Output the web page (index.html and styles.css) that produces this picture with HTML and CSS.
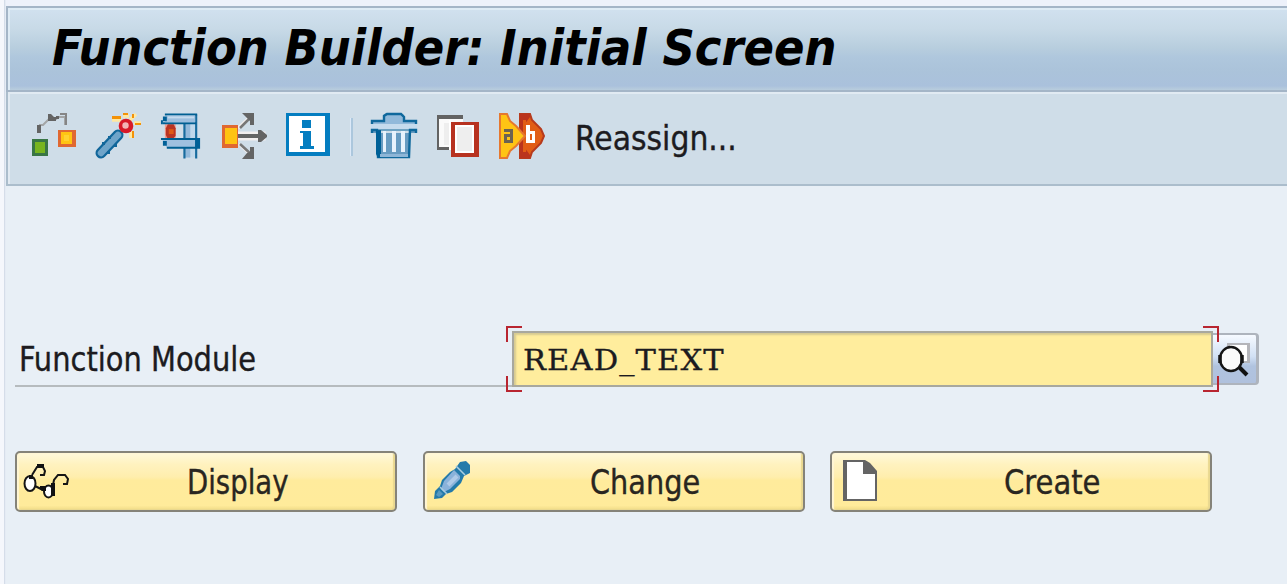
FILE: index.html
```html
<!DOCTYPE html>
<html lang="en">
<head>
<meta charset="utf-8">
<title>Function Builder: Initial Screen</title>
<link rel="stylesheet" href="styles.css">
</head>
<body>
<main class="window">
  <header class="titlebar"><h1 class="title">Function Builder: Initial Screen</h1></header>
  <nav class="toolbar">
    <svg class="icon" viewBox="0 0 46 46">
      <path d="M9 20v-8h3l6-6h7l3-2h6v8" fill="none" stroke="#a3a5a6" stroke-width="2"/>
      <path d="M6 12h4v8H6zM17 1h3l3 3h2v4h-8zM25 3h3v3h-3z" fill="#646464"/><path d="M29 1h6v11" fill="none" stroke="#858585" stroke-width="2"/>
      <path d="M1 26h16v17H1z" fill="#397645"/><path d="M4 29h10v11H4z" fill="#78b51e"/>
      <path d="M27 17h18v17H27z" fill="#e06831"/><path d="M30 19h11v12H30z" fill="#ffc412"/><path d="M33 22h5v6h-5z" fill="#ffd230"/>
    </svg>
    <svg class="icon" viewBox="0 0 46 46">
      <path d="M6 40 23 22" stroke="#11669a" stroke-width="11" stroke-linecap="round"/>
      <path d="M6 40 23 22" stroke="#6fa4c9" stroke-width="6.500" stroke-linecap="round"/>
      <path d="M7 29h3v3H7zM13 23h3v3h-3zM19 31h3v3h-3zM12 38h3v3h-3z" fill="#11669a"/>
      <path d="m35 7 6-6M39 10h7M28 3h6M17 7h9M36 18v7" stroke="#ffe8a0" stroke-width="3.500"/>
      <path d="M17 3h9v3h-9zM28 0h5v2h-5zM37 1h2v4h-2zM40 10h6v2h-6zM37 18h2v7h-2z" fill="#f39208"/>
      <circle cx="31" cy="13" r="7.3" fill="#d71928"/><circle cx="30.500" cy="12.500" r="3.200" fill="#f3b4b5"/>
    </svg>
    <svg class="icon clamp" viewBox="0 0 46 46">
      <path d="M26 9h12v36H26z" fill="#c0d8eb"/><path d="M26 10h6v35h-6z" fill="#93b9da"/><path d="M26 10v36M38 1v45" stroke="#176b9e" stroke-width="2.200"/>
      <path d="M6 11h11v16H6z" fill="#f29a8d"/><path d="m9 11h6l2 4v8l-3 3H9l-2-4v-7z" fill="#b93524"/><path d="M10 16h5v5h-5z" fill="#df5a16"/>
      <path d="M6 1h33M4 10h34" stroke="#005f92" stroke-width="2"/><path d="M8 2h29v7H6z" fill="#9cbede"/><path d="M4 3h4v5H4zM2 7h2v4H2z" fill="#006097"/><path d="M9 3h27v2H9z" fill="#c5daed"/>
      <path d="M3 26h36v9H8z" fill="#9fc0df"/><path d="M2 26h36v9H8" fill="none" stroke="#005f92" stroke-width="2"/><path d="M4 28h4v5H4zM37 25h5v11h-5z" fill="#006097"/>
    </svg>
    <svg class="icon" viewBox="0 0 46 46">
      <path d="M16 20h26v6H16zM16 15 29 3M17 31l14 13" fill="none" stroke="#f2eeee" stroke-width="3"/>
      <path d="M18 15 29 4M18 31l12 11" stroke="#777" stroke-width="2.500"/>
      <path d="M20 0h12v12h-4V8l-4-4zM28 34h4v12H20l5-6 3-1zM15 21h21v-4h3l6 5v2l-6 5h-3v-4H15z" fill="#646464"/>
      <path d="M0 12h16v23H0z" fill="#e06831"/><path d="M3 15h12v16H3z" fill="#ffc412"/>
    </svg>
    <svg class="icon" viewBox="0 0 46 46">
      <path d="M0 0h44v43H0z" fill="#047dc0"/><path d="M3 3h36v36H3z" fill="#fff"/>
      <path d="M16 7h9v8h-9zM14 18h11v15h3v3H14v-3h3V20h-3z" fill="#047dc0"/>
    </svg>
    <span class="separator"></span>
    <svg class="icon" viewBox="0 0 46 46">
      <path d="M12 7V2l3-2h15l3 2v5h10l3 4H0l3-4z" fill="#91b9da"/>
      <path d="M1 11V8h12V3l3-2h14l3 3v4h12v3" fill="none" stroke="#0f689c" stroke-width="2.400"/>
      <path d="M0 11h46v5H0z" fill="#c5dbed"/>
      <path d="M1 20v-3h5l1 27h31l1-27h6v3" fill="#679bc1" stroke="#0f689c" stroke-width="2.400"/>
      <path d="M5 17h5v28H7l-2-4z" fill="#006097"/><path d="M9 41h28v3H9z" fill="#8eb6d7"/>
      <path d="M12 18h3v21h-3zM21 18h4v21h-4zM30 18h4v21h-4z" fill="#e8f2fc"/><path d="M6 17h33" stroke="#0f689c" stroke-width="1"/>
    </svg>
    <svg class="icon" viewBox="0 0 46 46">
      <path d="M3 3h25v32H3z" fill="#fafafa"/><path d="M2 2h26v4H4v28h10v3H2z" fill="#636363"/>
      <path d="M9 10h6v22H9z" fill="#eee"/><path d="M14 7h2v30h-2z" fill="#fff"/>
      <path d="M16 9h28v35H16z" fill="#b73220"/><path d="M20 12h19v28H20z" fill="#fff"/><path d="M22 14h15v24H22z" fill="#eee"/>
    </svg>
    <svg class="icon" viewBox="0 0 46 46">
      <path d="M21 1h10l2 6 9 9 3 7-3 7-9 9-2 6H21z" fill="#e15d15" stroke="#b63a1d" stroke-width="2"/>
      <path d="M21 1h10v3l-6 8 5 11-5 11 6 8v3H21z" fill="#ba341d"/>
      <path d="M24 7h3v32h-3z" fill="#e15d15"/>
      <path d="M1 1h7l3 7 6 5 9 10-9 10-6 5-3 7H1z" fill="#ffc414" stroke="#e57830" stroke-width="2"/>
      <path d="M5 16h9v14H5v-9h6v-2H5zm3 8v3h3v-3z" fill="#6c6352" fill-rule="evenodd"/>
      <path d="M27 12h4v6h5v12h-9zm4 9v6h2v-6z" fill="#fff" fill-rule="evenodd"/>
    </svg>
    <span class="label reassign">Reassign...</span>
  </nav>
  <section class="content">
    <div class="field-row">
      <div class="field-label"><span class="label module-label">Function Module</span></div>
      <div class="field"><div class="input"><span class="value">READ_TEXT</span></div>
        <i class="corner tl"></i><i class="corner tr"></i><i class="corner bl"></i><i class="corner br"></i>
      </div>
      <div class="search"><svg class="search-icon" viewBox="0 0 43 48">
        <path d="M14 8h23v20H14z" fill="#b4b5ba"/><path d="M17 10h17v16H17z" fill="#fff"/>
        <path d="m25 31 9 9" stroke="#111" stroke-width="4"/>
        <ellipse cx="18" cy="24" rx="11" ry="12" fill="#fafafa" stroke="#151515" stroke-width="2.400"/>
        <path d="M7 20v8M29 20v8" stroke="#151515" stroke-width="3.500"/>
      </svg></div>
    </div>
    <div class="actions">
      <button class="button"><svg class="button-icon" viewBox="0 0 48 46">
        <ellipse cx="13" cy="25.500" rx="5.500" ry="7.500" fill="#fff" stroke="#151515" stroke-width="2"/>
        <ellipse cx="31.500" cy="33.500" rx="4.500" ry="6" fill="#fff" stroke="#151515" stroke-width="2"/>
        <path d="m15 17 5-8h6l2 4-1 4h-4M36 27l1-5 4-5h7l3 4-1 5h-4M18 28l8 4" fill="none" stroke="#151515" stroke-width="2"/>
        <path d="M20 6h7v4h-7zM12 17h4v4h-4zM23 28h6v5h-4l-2-2zM34 25h4v13h-4z" fill="#111"/>
      </svg><span class="label display-label">Display</span></button>
      <button class="button"><svg class="button-icon" viewBox="0 0 48 46">
        <path d="m9 41 1-8 5-5 2-6 8-8 5-3 5-7 6-1 4 4v8l-6 3-3 7-9 9-6 2-4 4z" fill="#247aaa"/>
        <path d="m16 31 3-8 10-11 6 6v3L25 31l-6 3z" fill="#8ab2da"/><path d="m23 27 9-9" stroke="#afcae8" stroke-width="4"/>
        <path d="m31 8 9 9M15 29l7 7" stroke="#a9cde0" stroke-width="1.500"/><path d="m11 37 3-5 4 4-4 3z" fill="#5899c0"/>
      </svg><span class="label change-label">Change</span></button>
      <button class="button"><svg class="button-icon" viewBox="0 0 48 46">
        <path d="M11 2h22l5 3 7 8v30H11z" fill="#646464"/><path d="M15 4h16v12h12v25H15z" fill="#fff"/>
      </svg><span class="label create-label">Create</span></button>
    </div>
  </section>
</main>
</body>
</html>
```
FILE: styles.css
```css
* { box-sizing: border-box; }
body { margin: 0; height: 584px; overflow: hidden; background: #e8eff6; color: #1c1b20; font-family: "DejaVu Sans Condensed", "DejaVu Sans", sans-serif; }
.window { height: 584px; padding: 6px 0 0 6px; background: linear-gradient(90deg, #f5f7fc 0 4px, #d5dde9 4px 5px, #e5ebf4 5px 6px, transparent 6px), linear-gradient(#edf1fa 0 6px, #e8eff6 6px); }
.titlebar { height: 86px; padding-left: 44px; display: flex; align-items: center; border: solid #a4b5c7; border-width: 2px 0 2px 2px; box-shadow: inset 2px 2px #deebf5; background: linear-gradient(#d1e1ef 0%, #c8dae7 25%, #b8cede 48%, #afc7dd 60%, #abc3da 77%, #aac1dc 95%, #b9cddd 100%); }
.title { margin: -2px 0 0; color: #000; font: italic bold 50px/60px "DejaVu Sans", sans-serif; white-space: nowrap; transform-origin: 0 50%; transform: scaleX(.899); }
.toolbar { height: 94px; padding: 21px 0 0 23px; display: flex; align-items: flex-start; gap: 17.7px; background: #cfdde8; border: solid #abbdcc; border-width: 0 0 2px 2px; box-shadow: inset 2px 2px #e1eaf2; }
.icon { width: 46px; height: 46px; flex: none; overflow: visible; }
.clamp { padding-left: 1px; }
.separator { width: 3px; height: 38px; margin: 5px 0 0 1px; border-left: 1px solid #dce9f8; border-right: 2px solid #acc7dd; }
.label { display: inline-block; white-space: nowrap; font-size: 34px; line-height: 46px; transform-origin: 0 50%; -webkit-text-stroke: .35px; }
.reassign { margin: 2px 0 0 13px; transform: scaleX(.977); }
.content { padding: 145px 0 0 9px; }
.field-row { display: flex; height: 56px; }
.field-label { width: 497px; height: 56px; padding: 5px 0 0 4px; border-bottom: 2px solid #b6bbbe; }
.module-label { transform: scaleX(.945); }
.field { position: relative; width: 701px; height: 56px; }
.input { height: 56px; padding: 5px 0 0 9px; background: #ffed9d; border: 2px solid #a8a89e; box-shadow: inset 2px 2px 2px #d6ca92; }
.value { display: inline-block; font: 27.500px/45px "DejaVu Serif", serif; letter-spacing: 1px; white-space: nowrap; transform-origin: 0 50%; transform: scaleX(1.11); -webkit-text-stroke: .3px; }
.corner { position: absolute; width: 16px; height: 16px; border: 0 solid #b82530; }
.tl { left: -6px; top: -5px; border-width: 2px 0 0 2px; }
.tr { right: -6px; top: -5px; border-width: 2px 2px 0 0; }
.bl { left: -6px; bottom: -5px; border-width: 0 0 2px 2px; }
.br { right: -6px; bottom: -5px; border-width: 0 2px 2px 0; }
.search { width: 46px; height: 52px; margin-top: 2px; border: solid #aeb4bd; border-width: 2px 3px 2px 0; border-radius: 0 4px 4px 0; background: linear-gradient(#f6faff, #d1e0f4 45%, #b0c3df 65%, #b0c1dd); }
.search-icon { width: 43px; height: 48px; display: block; }
.actions { display: flex; gap: 25.5px; margin-top: 64px; }
.button { display: grid; grid-template-columns: 48px 1fr; align-items: start; width: 382px; height: 61px; padding: 5px 0; color: #292620; font-family: inherit; text-align: left; border: 2px solid #858379; border-radius: 5px; background: linear-gradient(#fff9db 0, #fff2bf 20%, #ffeead 42%, #ffeb9c 48%, #ffeb9b 92%, #f1dc87 100%); box-shadow: inset 2px 1px 1px #fff6d4, inset -2px -1px 1px #e9d890; }
.button-icon { width: 48px; height: 46px; overflow: visible; }
.button .label { margin-top: 1px; }
.display-label { margin-left: 122px; transform: scaleX(.9); }
.change-label { margin-left: 117px; transform: scaleX(.94); }
.create-label { margin-left: 124px; transform: scaleX(.95); }
```
